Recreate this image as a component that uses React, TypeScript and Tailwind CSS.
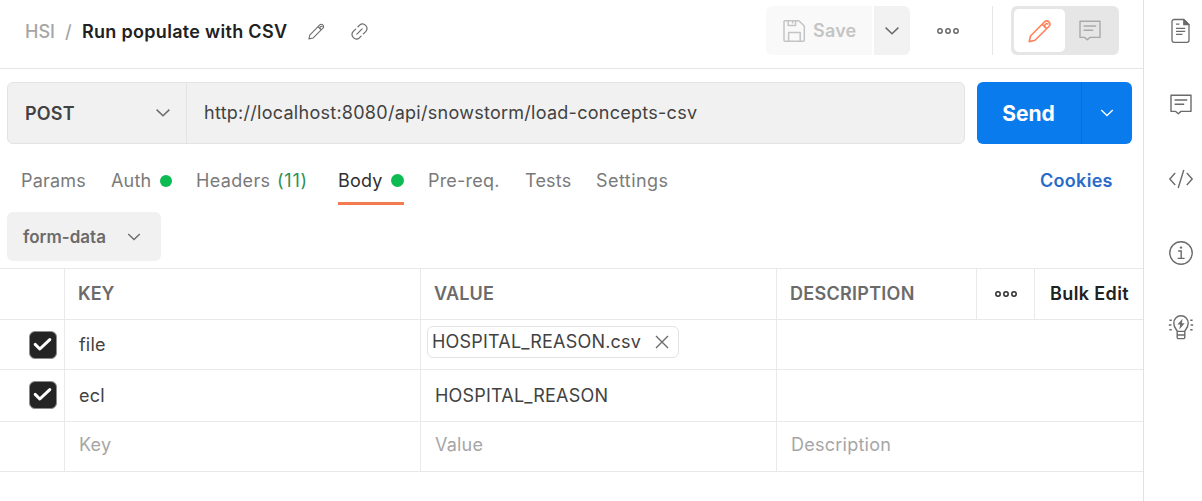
import type { ReactNode } from "react";

type IconProps = { className?: string };

const Chevron = ({ className = "" }: IconProps) => (
  <svg width="16" height="10" viewBox="0 0 16 10" fill="none" stroke="currentColor" strokeWidth="1.5" className={`shrink-0 ${className}`}>
    <path d="M1.6 1.6 8 7.8l6.4-6.2" />
  </svg>
);

const Pencil = ({ className = "" }: IconProps) => (
  <svg viewBox="0 0 24 24" fill="none" stroke="currentColor" strokeLinejoin="round" className={`shrink-0 ${className}`}>
    <path d="M1.2 22.6l1.3-5.6L16.6 2.8a3 3 0 0 1 4.3 0l.2.2a3 3 0 0 1 0 4.3L7 21.3l-5.8 1.3zM14.2 5.2l4.5 4.5" />
    <path d="M17.4 8.4a2.2 2.2 0 0 1 0-3.1 2.2 2.2 0 0 1 3.1 0" />
  </svg>
);

const LinkIcon = ({ className = "" }: IconProps) => (
  <svg viewBox="0 0 18 18" fill="none" stroke="currentColor" strokeWidth="1.25" strokeLinecap="round" className={`shrink-0 ${className}`}>
    <path d="M7.4 4 9.2 2.2a4.7 4.7 0 0 1 6.6 6.6L13 11.6" />
    <path d="M10.6 14 8.8 15.8a4.7 4.7 0 0 1-6.6-6.6L5 6.4" />
    <path d="M6.2 11.8 11.8 6.2" />
  </svg>
);

const SaveIcon = () => (
  <svg width="24" height="24" viewBox="0 0 24 24" fill="none" stroke="currentColor" strokeWidth="1.5" strokeLinejoin="round" className="shrink-0">
    <path d="M3 1.7h13.8L22.3 7v14.3a1 1 0 0 1-1 1H3a1 1 0 0 1-1-1V2.7a1 1 0 0 1 1-1zM6.2 2v4.6h7.4V2M6.6 22v-8.4h11.6V22M10.6 2.2v2.4" />
  </svg>
);

const Dots = ({ className = "" }: IconProps) => (
  <svg width="24" height="8" viewBox="0 0 24 8" fill="none" stroke="currentColor" strokeWidth="1.5" className={`shrink-0 ${className}`}>
    <circle cx="4" cy="4" r="2.2" />
    <circle cx="12" cy="4" r="2.2" />
    <circle cx="20" cy="4" r="2.2" />
  </svg>
);

const Comment = ({ className = "" }: IconProps) => (
  <svg width="24" height="24" viewBox="0 0 24 24" fill="none" stroke="currentColor" strokeWidth="1.4" strokeLinejoin="round" className={`shrink-0 ${className}`}>
    <path d="M2 2.2h20v16.2H12l-2.7 2.3-2.6-2.3H2zM5.6 7h12.6M5.6 11.2h9.6" />
  </svg>
);

const DocIcon = () => (
  <svg width="20" height="26" viewBox="0 0 20 26" fill="none" stroke="currentColor" strokeWidth="1.3" strokeLinejoin="round">
    <path d="M3 1.5h9.6l5.4 5.2v15.6a2 2 0 0 1-2 2H3a2 2 0 0 1-2-2V3.5a2 2 0 0 1 2-2z" />
    <path d="M12.8 1.5v5.2H18z" fill="currentColor" />
    <path d="M5 6.2h3.4M5 10.4h9.2M5 13.4h9.2M5 16.4h6.4" />
  </svg>
);

const CodeIcon = () => (
  <svg width="26" height="20" viewBox="0 0 26 20" fill="none" stroke="currentColor" strokeWidth="1.4">
    <path d="M7.2 4 1.8 10l5.4 6M18.8 4l5.4 6-5.4 6M15.8 1l-5.6 18" />
  </svg>
);

const InfoIcon = () => (
  <svg width="26" height="26" viewBox="0 0 26 26" fill="none" stroke="currentColor" strokeWidth="1.4">
    <circle cx="13" cy="13" r="11.2" />
    <path d="M10.2 11h3v7.4M9.6 18.4h7" />
    <circle cx="13" cy="7.6" r="1.2" fill="currentColor" stroke="none" />
  </svg>
);

const BulbIcon = () => (
  <svg width="26" height="26" viewBox="0 0 26 26" fill="none" stroke="currentColor" strokeWidth="1.4">
    <path d="M9.2 17.4c-.1-1.5-3.4-3.5-3.4-8.1A7.2 7.2 0 0 1 13 1.7a7.2 7.2 0 0 1 7.2 7.6c0 4.6-3.3 6.6-3.4 8.1zM9.2 17.4v6.2a1 1 0 0 0 1 1h5.6a1 1 0 0 0 1-1v-6.2M9.2 21h7.6" />
    <path d="M14.6 4.8 9.4 10.6h2.8l-.9 4.8 5.3-6.2h-2.8z" fill="currentColor" stroke="none" />
    <path d="M1.4 6.3h2.4M.8 11h2.6M1.4 15.7h2.4M22.2 6.3h2.4M22.6 11h2.6M22.2 15.7h2.4" />
  </svg>
);

const Check = () => (
  <span className="ml-[29px] flex size-7 items-center justify-center rounded-[6px] border border-[#8c8c8c] bg-[#242424] text-white">
    <svg width="20" height="16" viewBox="0 0 20 16" fill="none" stroke="currentColor" strokeWidth="3" strokeLinecap="round" strokeLinejoin="round">
      <path d="M2.2 7.4 6.8 12 16.8 2.6" />
    </svg>
  </span>
);

const Row = ({ children, className = "" }: { children: ReactNode; className?: string }) => (
  <div className={`grid grid-cols-[65px_356px_356px_1fr] border-b border-[#e9e9e9] ${className}`}>{children}</div>
);

const Cell = ({ children, className = "" }: { children?: ReactNode; className?: string }) => (
  <div className={`flex items-center border-r border-[#e9e9e9] ${className}`}>{children}</div>
);

const Dot = ({ className = "" }: IconProps) => <span className={`rounded-full bg-[#0cbb52] ${className}`} />;

export default function App() {
  return (
    <div className="flex h-[501px] w-[1202px] overflow-hidden bg-white font-[Inter,sans-serif] text-[18px] leading-6 tracking-[0.2px] whitespace-nowrap text-[#6b6b6b]">
      <main className="flex w-[1144px] shrink-0 flex-col border-r border-[#e1e1e1]">
        <header className="flex h-[69px] shrink-0 items-start border-b border-[#e6e6e6]">
          <div className="mt-5 flex w-[766px] items-center pl-[25px] font-medium">
            <span className="w-10 tracking-normal text-[#a6a6a6]">HSI</span>
            <span className="w-[17px] text-[#a6a6a6]">/</span>
            <span className="w-[225px] font-semibold tracking-[0.3px] text-[#212121]">Run populate with CSV</span>
            <Pencil className="-mt-0.5 ml-px size-[17px] stroke-[1.5]" />
            <LinkIcon className="-mt-0.5 ml-[26px] size-[17px]" />
          </div>
          <div className="mt-1.5 flex h-[49px] w-[106px] items-center rounded-l-[6px] bg-[#f9f9f9] pl-4 font-semibold text-[#c4c4c4]">
            <SaveIcon />
            <span className="ml-[7px]">Save</span>
          </div>
          <div className="mt-1.5 ml-[2px] flex h-[49px] w-9 items-center justify-center rounded-r-[6px] bg-[#f2f2f2]">
            <Chevron />
          </div>
          <Dots className="mt-[27px] ml-[26px]" />
          <div className="mt-1.5 ml-8 h-[49px] w-px bg-[#e6e6e6]" />
          <div className="mt-1.5 ml-[18px] flex h-[49px] w-[108px] items-center rounded-[6px] bg-[#e6e6e6] pl-[3px]">
            <div className="flex h-[43px] w-[51px] items-center justify-center rounded-[5px] bg-white text-[#ff8259]">
              <Pencil className="size-6 stroke-[1.6]" />
            </div>
            <Comment className="ml-[13px] text-[#a9a9a9]" />
          </div>
        </header>

        <div className="mt-[13px] flex h-[62px] shrink-0 pl-[7px]">
          <div className="flex w-[958px] rounded-[6px] border border-[#e3e3e3] bg-[#f1f1f1]">
            <div className="flex w-[179px] items-center justify-between border-r border-[#e3e3e3] pr-[15px] pl-[17px] font-semibold text-[#424242]">
              <span className="pt-px">POST</span>
              <Chevron className="text-[#6b6b6b]" />
            </div>
            <div className="flex items-center pb-px pl-[17px] tracking-[0.27px] text-[#424242]">
              http://localhost:8080/api/snowstorm/load-concepts-csv
            </div>
          </div>
          <div className="ml-3 flex w-[155px] overflow-hidden rounded-[6px] bg-[#097bed] text-white">
            <div className="flex w-[105px] items-center justify-center border-r border-[#076fd6] pt-[2px] pr-px text-[21px] font-bold tracking-normal">Send</div>
            <div className="flex flex-1 items-center justify-center">
              <Chevron className="scale-90" />
            </div>
          </div>
        </div>

        <nav className="mt-[21px] flex h-10 shrink-0 items-start pt-1 pl-[21px] text-[#7a7a7a]">
          <span className="w-[90px]">Params</span>
          <span className="w-[49px]">Auth</span>
          <Dot className="mt-1.5 size-3" />
          <span className="ml-[24px] w-[81px] tracking-[0.35px]">Headers</span>
          <span className="w-[61px] tracking-[0.8px] text-[#2f8f57]">(11)</span>
          <div className="flex h-9 w-[66px] items-start justify-between border-b-[3px] border-[#f47b4f] text-[#303030]">
            Body
            <Dot className="mt-[5px] size-[13px]" />
          </div>
          <span className="ml-[24px] w-[97px]">Pre-req.</span>
          <span className="w-[71px]">Tests</span>
          <span className="w-[444px] tracking-[0.45px]">Settings</span>
          <span className="font-semibold tracking-[0.3px] text-[#2a6bc9]">Cookies</span>
        </nav>

        <div className="mt-[7px] ml-[7px] flex h-[49px] w-[154px] shrink-0 items-center rounded-[6px] bg-[#f1f1f1] pl-4 text-[17px] font-semibold tracking-normal">
          <span className="w-[103px]">form-data</span>
          <Chevron className="scale-90" />
        </div>

        <section className="mt-[7px] border-t border-[#e9e9e9]">
          <Row className="h-[51px] font-semibold">
            <Cell />
            <Cell className="pl-[13px] tracking-normal">KEY</Cell>
            <Cell className="pl-[13px]">VALUE</Cell>
            <div className="flex">
              <Cell className="w-[200px] pl-[13px] tracking-[0.28px]">DESCRIPTION</Cell>
              <Cell className="w-[58px] justify-center text-[#303030]">
                <Dots />
              </Cell>
              <div className="flex items-center pl-[15px] tracking-[0.38px] text-[#212121]">Bulk Edit</div>
            </div>
          </Row>
          <Row className="h-[50px] text-[#424242]">
            <Cell>
              <Check />
            </Cell>
            <Cell className="pl-[14px]">file</Cell>
            <Cell className="items-start pt-1.5 pl-1.5">
              <div className="flex h-8 w-[252px] items-center rounded-[6px] border border-[#e3e3e3] pl-1">
                <span className="w-[223px]">HOSPITAL_REASON.csv</span>
                <svg width="14" height="14" viewBox="0 0 14 14" fill="none" stroke="#6b6b6b" strokeWidth="1.4">
                  <path d="m1 1 12 12M13 1 1 13" />
                </svg>
              </div>
            </Cell>
            <div />
          </Row>
          <Row className="h-[52px] text-[#424242]">
            <Cell className="pb-[2px]">
              <Check />
            </Cell>
            <Cell className="pt-px pl-[14px]">ecl</Cell>
            <Cell className="pt-px pl-[14px]">HOSPITAL_REASON</Cell>
            <div />
          </Row>
          <Row className="h-[50px] text-[#a6a6a6]">
            <Cell />
            <Cell className="pb-[3px] pl-[14px]">Key</Cell>
            <Cell className="pb-[3px] pl-[14px]">Value</Cell>
            <div className="flex items-center pb-[3px] pl-[14px] tracking-[0.25px]">Description</div>
          </Row>
        </section>
      </main>

      <aside className="flex flex-1 flex-col items-center pl-4 text-[#6b6b6b]">
        <div className="mt-[18px] flex h-[26px] items-center"><DocIcon /></div>
        <div className="mt-[48px] flex h-[26px] items-center"><Comment /></div>
        <div className="mt-[48px] flex h-[26px] items-center"><CodeIcon /></div>
        <div className="mt-[48px] flex h-[26px] items-center"><InfoIcon /></div>
        <div className="mt-[48px] flex h-[26px] items-center"><BulbIcon /></div>
      </aside>
    </div>
  );
}
